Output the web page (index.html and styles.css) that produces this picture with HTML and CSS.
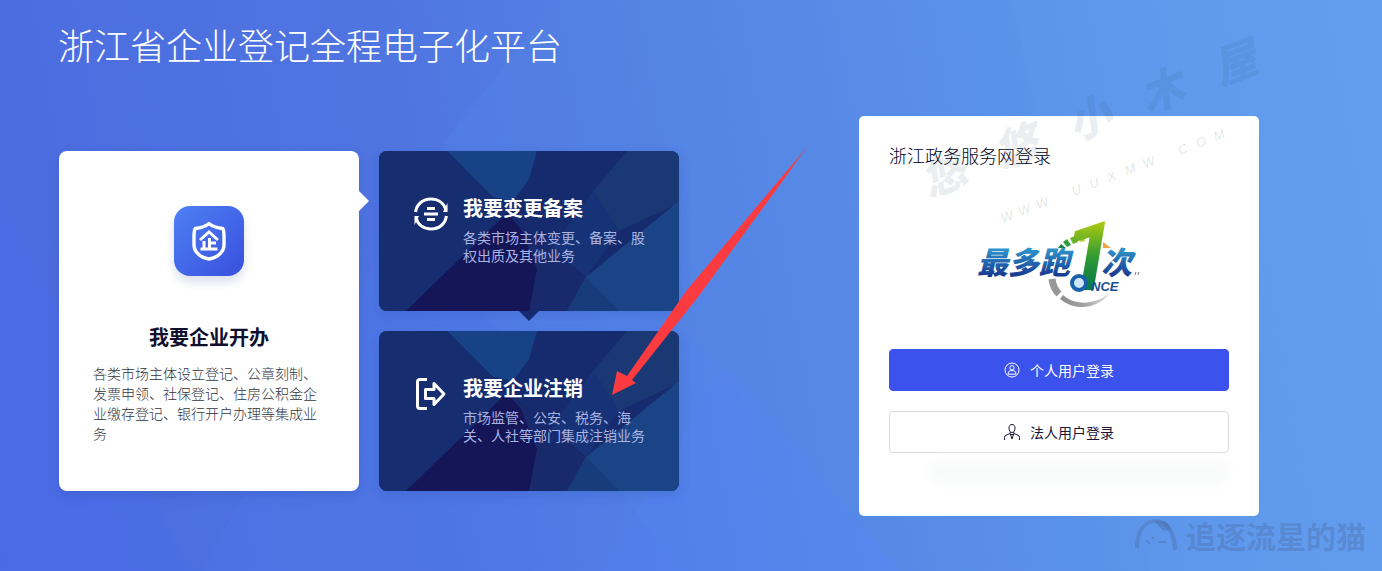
FILE: index.html
```
<!DOCTYPE html>
<html lang="zh-CN">
<head>
    <meta charset="UTF-8">
    <meta name="viewport" content="width=device-width, initial-scale=1.0">
    <title>浙江省企业登记全程电子化平台</title>
    <link rel="stylesheet" href="styles.css">
</head>
<body>

<svg class="page-bg" viewBox="0 0 1382 571" preserveAspectRatio="none" aria-hidden="true">
    <polygon points="555,0 1382,0 1382,571 680,571 400,200" fill="#5a98e6" opacity="0.12"/>
    <polygon points="470,100 900,571 200,571" fill="#4f86ff" opacity="0.1"/>
    <polygon points="725,365 900,571 600,571" fill="#5a80ff" opacity="0.2"/>
    <polygon points="0,200 190,571 0,571" fill="#4a6cff" opacity="0.14"/>
    <polygon points="1010,0 1382,0 1382,571 1150,571" fill="#66a8f4" opacity="0.12"/>
</svg>

<header class="header">
    <h1>浙江省企业登记全程电子化平台</h1>
</header>

<main class="main">
    <div class="services">
        <a href="#" class="card card-open">
            <span class="open-icon">
                <svg width="34" height="40" viewBox="0 0 34 40" aria-hidden="true">
                    <path d="M17 2.500C13 6 8 7 3.200 7.500C2.500 9 2 11 2 14V24C2 31 9 37 17 38C25 37 32 31 32 24V14C32 11 31.500 9 30.800 7.500C26 7 21 6 17 2.500Z" fill="none" stroke="#fff" stroke-width="3.400" stroke-linejoin="round"/>
                    <path d="M8 19L17 11L26 19M17.500 17V27M17.500 22H24M12 20V27M8.500 28H25.500" fill="none" stroke="#fff" stroke-width="3"/>
                </svg>
            </span>
            <h2>我要企业开办</h2>
            <p>各类市场主体设立登记、公章刻制、发票申领、社保登记、住房公积金企业缴存登记、银行开户办理等集成业务</p>
        </a>

        <div class="side-cards">
            <a href="#" class="card card-dark card-change">
                <svg class="card-bg" viewBox="0 0 300 160" preserveAspectRatio="none" aria-hidden="true">
                    <g id="facets">
                        <rect width="300" height="160" fill="#162b6d"/>
                        <path d="M68 0H158L150 28L134 50L114 46Z" fill="#174285"/>
                        <path d="M248 0H300V52L240 80L214 40Z" fill="#1a3873"/>
                        <path d="M214 40L240 80L207 126L170 100Z" fill="#173377"/>
                        <path d="M68 0L128 62L27 160H0V0Z" fill="#162e70"/>
                        <path d="M128 62L27 160H195L207 126Z" fill="#151657"/>
                        <path d="M128 62L207 126L240 160H150L158 118L142 78Z" fill="#182a6c"/>
                        <path d="M300 50L207 126L188 160H300Z" fill="#1a4485"/>
                        <path d="M207 126L240 160H188Z" fill="#183b7c"/>
                    </g>
                </svg>
                <svg class="card-icon" width="34" height="34" viewBox="0 0 34 34" aria-hidden="true">
                    <g fill="none" stroke="#fff" stroke-width="3">
                        <path d="M1.600 15C2.600 7 9 2 17 2C24 2 30 6 32 13"/>
                        <path d="M32.400 19C31.400 27 25 32 17 32C10 32 4 28 2 21"/>
                        <path d="M13 11.500H21M10 17H24M13 22.500H21"/>
                    </g>
                    <path d="M33.500 6V15H29ZM0.500 28V19H5Z" fill="#fff"/>
                </svg>
                <span class="card-text">
                    <strong>我要变更备案</strong>
                    <span class="desc">各类市场主体变更、备案、股权出质及其他业务</span>
                </span>
            </a>
            <a href="#" class="card card-dark">
                <svg class="card-bg" viewBox="0 0 300 160" preserveAspectRatio="none" aria-hidden="true">
                    <use href="#facets"/>
                </svg>
                <svg class="card-icon" width="34" height="34" viewBox="0 0 34 34" aria-hidden="true">
                    <g fill="none" stroke="#fff" stroke-width="3">
                        <path d="M13 2.500H6Q3.500 2.500 3.500 5V29Q3.500 31.500 6 31.500H13"/>
                        <path d="M11.500 12.500H20V6.500L30 17L20 27.500V21.500H11.500Z" stroke-linejoin="round"/>
                    </g>
                </svg>
                <span class="card-text">
                    <strong>我要企业注销</strong>
                    <span class="desc">市场监管、公安、税务、海关、人社等部门集成注销业务</span>
                </span>
            </a>
        </div>
    </div>

    <section class="login">
        <h2>浙江政务服务网登录</h2>
        <svg class="once-logo" width="164" height="90" viewBox="0 0 164 90" role="img" aria-label="最多跑1次">
            <defs>
                <linearGradient id="blue" x1="0" y1="0" x2="0" y2="1">
                    <stop offset="0.200" stop-color="#2f9bd0"/>
                    <stop offset="0.900" stop-color="#16308a"/>
                </linearGradient>
                <linearGradient id="green" x1="0" y1="0" x2="0" y2="1">
                    <stop offset="0.200" stop-color="#a9c814"/>
                    <stop offset="0.500" stop-color="#2f9a33"/>
                    <stop offset="0.800" stop-color="#04774b"/>
                </linearGradient>
                <linearGradient id="grey" x1="0" y1="0" x2="1" y2="0">
                    <stop offset="0" stop-color="#8e8e8e"/>
                    <stop offset="0.500" stop-color="#a2a2a2"/>
                    <stop offset="1" stop-color="#e4e4e4"/>
                </linearGradient>
            </defs>
            <path d="M75 59Q76 68 82 74" fill="none" stroke="#989898" stroke-width="7"/>
            <path d="M86 75C97 85 116 86 133 73C120 90 97 91 83 79Z" fill="url(#grey)"/>
            <path d="M81 28L84 24L89 28Z" fill="#15803f"/>
            <path d="M86 22L90 19L94 25L90 27Z" fill="#2f9c3b"/>
            <path d="M93 18L98 16L101 22L96 24Z" fill="#6fb42e"/>
            <path d="M101 15L107 14L108 21L103 22Z" fill="#b9cd2c"/>
            <path d="M126 22L134 28L126 28Z" fill="#f0a440"/>
            <text class="logo-cn" x="0" y="54" fill="url(#blue)">最多跑</text>
            <text class="logo-cn" x="124" y="54" fill="url(#blue)">次</text>
            <text class="logo-one" x="85" y="70" fill="url(#green)">1</text>
            <circle cx="102" cy="63" r="7" fill="#cfe6f7" stroke="#1762a8" stroke-width="4"/>
            <text class="logo-en" x="114" y="71">NCE</text>
            <path d="M158 55L159 52M161 55L162 52" stroke="#777" stroke-width="1"/>
        </svg>
        <button type="button" class="btn btn-primary">
            <svg width="16" height="16" viewBox="0 0 16 16" fill="none" stroke="currentColor" aria-hidden="true">
                <circle cx="8" cy="8" r="7"/>
                <circle cx="8" cy="5.800" r="2.200"/>
                <path d="M4.200 12.200V11C4.200 9.500 5.500 8.600 8 8.600C10.500 8.600 11.800 9.500 11.800 11V12.200Z"/>
            </svg>
            个人用户登录
        </button>
        <button type="button" class="btn">
            <svg width="16" height="16" viewBox="0 0 16 16" fill="none" stroke="currentColor" aria-hidden="true">
                <path d="M5 4C5 1.500 6.300 0.500 8 0.500C9.700 0.500 11 1.500 11 4C11 6.500 9.800 8.500 8 8.500C6.200 8.500 5 6.500 5 4Z"/>
                <path d="M6.200 8V9.500L2 11.200Q0.500 11.800 0.500 13.500V16M9.800 8V9.500L14 11.200Q15.500 11.800 15.500 13.500V16M6.200 9.500L8 15L9.800 9.500M7 10.500H9"/>
            </svg>
            法人用户登录
        </button>
        <div class="smudge"></div>
    </section>

    <svg class="arrow" width="200" height="256" viewBox="0 0 200 256" aria-hidden="true">
        <defs>
            <linearGradient id="tail" x1="1" y1="0" x2="0" y2="1">
                <stop offset="0" stop-color="#fb3b3f" stop-opacity="0.3"/>
                <stop offset="0.120" stop-color="#fb3b3f"/>
            </linearGradient>
        </defs>
        <path d="M199 0L75 148L15 234L5 229L0 253L24 241L20 238L86 155Z" fill="url(#tail)"/>
    </svg>
</main>

<div class="mark mark-name" aria-hidden="true">
    <span>悠</span><span>悠</span><span>小</span><span>木</span><span>屋</span>
</div>
<div class="mark mark-site" aria-hidden="true">
    <span>W</span><span>W</span><span>W</span><span></span><span>U</span><span>U</span><span>X</span><span>M</span><span>W</span><span></span><span>C</span><span>O</span><span>M</span>
</div>
<div class="mark mark-author" aria-hidden="true">
    <svg width="44" height="34" viewBox="0 0 44 34" fill="none" stroke="currentColor">
        <path d="M3 30C3 20 6 8 16 4C24 1 40 4 41 32" stroke-width="4"/>
        <path d="M22 4C30 2 35 5 36 11C31 14 27 11 22 4Z" fill="currentColor"/>
        <path d="M12 22L16 26M24 24H32M18 19L20 21" stroke-width="2"/>
    </svg>
    追逐流星的猫
</div>

</body>
</html>
```

FILE: styles.css
```
* {
    box-sizing: border-box;
}

body {
    margin: 0;
    min-height: 100vh;
    position: relative;
    overflow: hidden;
    font-family: "Noto Sans CJK SC", sans-serif;
    font-weight: 300;
    color: #10102e;
    background: linear-gradient(80deg, #4b6be0 0%, #4f74e0 30%, #5687e6 58%, #5f98ec 82%, #649ff0 100%);
}

h1, h2, p {
    margin: 0;
}

a {
    color: inherit;
    text-decoration: none;
}

.page-bg {
    position: absolute;
    top: 0;
    left: 0;
    width: 100%;
    height: 100%;
    z-index: -1;
}

.header {
    padding: 18px 58px 0;
}

.header h1 {
    font-size: 36px;
    line-height: 52px;
    font-weight: 300;
    color: #fff;
}

/* content */
.main {
    position: relative;
    display: flex;
    justify-content: space-between;
    align-items: flex-start;
    padding: 46px 123px 0 59px;
}

.services {
    display: flex;
    gap: 20px;
    margin-top: 35px;
}

.card {
    position: relative;
    width: 300px;
    border-radius: 8px;
    box-shadow: 0 4px 12px rgba(30, 60, 160, 0.2);
}

.card-open {
    display: flex;
    flex-direction: column;
    align-items: center;
    min-height: 340px;
    padding: 55px 34px 0;
    background: #fff;
}

.card-open::after {
    content: "";
    position: absolute;
    left: 100%;
    top: 40px;
    border: 10px solid transparent;
    border-left-color: #fff;
    border-right-width: 0;
}

.open-icon {
    display: flex;
    align-items: center;
    justify-content: center;
    width: 70px;
    height: 70px;
    border-radius: 16px;
    background: linear-gradient(135deg, #4f80f5, #3850dd);
    box-shadow: 0 6px 10px rgba(40, 60, 140, 0.16);
}

.card-open h2 {
    margin-top: 46px;
    font-size: 20px;
    line-height: 30px;
    font-weight: 700;
}

.card-open p {
    margin-top: 11px;
    font-size: 14px;
    line-height: 20px;
    color: #33333c;
}

.side-cards {
    display: flex;
    flex-direction: column;
    gap: 20px;
}

.card-dark {
    display: flex;
    align-items: flex-start;
    gap: 15px;
    min-height: 160px;
    padding: 42px 30px 0 35px;
    color: #fff;
}

.card-bg {
    position: absolute;
    top: 0;
    left: 0;
    width: 100%;
    height: 100%;
    border-radius: 8px;
}

.card-change::after {
    content: "";
    position: absolute;
    left: 140px;
    top: 100%;
    border: 10px solid transparent;
    border-top-color: #162b6d;
    border-bottom-width: 0;
}

.card-icon {
    position: relative;
    flex: none;
    margin-top: 4px;
}

.card-text {
    position: relative;
}

.card-text strong {
    display: block;
    font-size: 20px;
    line-height: 30px;
    font-weight: 700;
}

.card-text .desc {
    display: block;
    margin-top: 5px;
    font-size: 14px;
    line-height: 18px;
    font-weight: 400;
    color: #a9b4e2;
}

/* login */
.login {
    width: 400px;
    min-height: 400px;
    padding: 25px 30px;
    border-radius: 5px;
    background: #fff;
}

.login h2 {
    font-size: 18px;
    line-height: 28px;
    font-weight: 300;
    color: #000018;
}

.once-logo {
    display: block;
    margin: 51px auto 39px;
    overflow: visible;
}

.logo-cn {
    font-size: 31px;
    font-weight: 900;
    font-style: italic;
}

.logo-one {
    font-family: Roboto, sans-serif;
    font-size: 96px;
    font-weight: 700;
    font-style: italic;
}

.logo-en {
    font-family: "Liberation Sans", sans-serif;
    font-size: 13px;
    font-weight: 700;
    font-style: italic;
    fill: #174f93;
}

.btn {
    display: flex;
    align-items: center;
    justify-content: center;
    gap: 10px;
    width: 100%;
    height: 42px;
    margin-bottom: 20px;
    border: 1px solid #d9dbe0;
    border-radius: 4px;
    background: #fff;
    color: #1c1638;
    font-family: inherit;
    font-size: 14px;
    font-weight: 400;
    cursor: pointer;
}

.btn-primary {
    border-color: #3c52ec;
    background: #3c52ec;
    color: #fff;
}

.smudge {
    height: 24px;
    margin: -12px 0 0 40px;
    border-radius: 12px;
    background: #f9fafa;
    filter: blur(6px);
}

.arrow {
    position: absolute;
    left: 612px;
    top: 72px;
}

/* watermarks */
.mark {
    position: absolute;
    pointer-events: none;
}

.mark-name {
    display: flex;
    gap: 34px;
    left: 910px;
    top: 83px;
    font-size: 44px;
    line-height: 66px;
    font-weight: 900;
    font-style: italic;
    color: rgba(40, 80, 100, 0.1);
    transform: rotate(-21deg);
}

.mark-site {
    display: grid;
    grid-template-columns: repeat(13, 19px);
    left: 993px;
    top: 166px;
    font-family: "Liberation Sans", sans-serif;
    font-size: 13px;
    line-height: 18px;
    font-style: italic;
    color: rgba(60, 80, 100, 0.16);
    transform: rotate(-21deg);
}

.mark-author {
    display: flex;
    align-items: center;
    gap: 8px;
    right: 16px;
    bottom: 14px;
    font-size: 30px;
    line-height: 44px;
    font-weight: 700;
    color: rgba(75, 105, 160, 0.35);
}
```
